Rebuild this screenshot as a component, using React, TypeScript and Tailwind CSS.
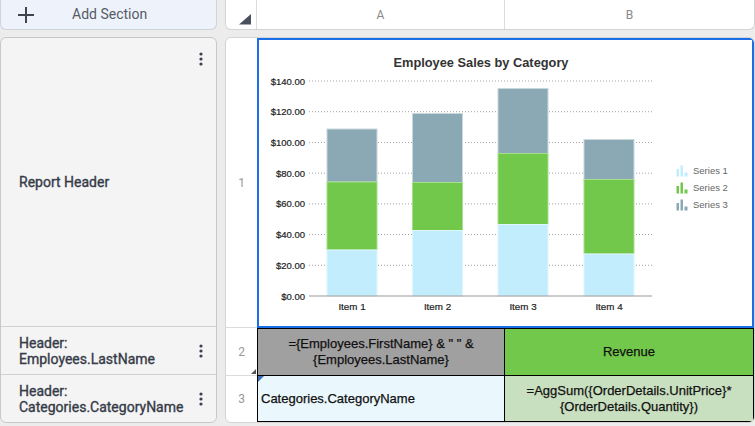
import React from 'react';

const ui = { fontFamily: 'Roboto, "Liberation Sans", sans-serif' };
const cellFont = { fontFamily: '"Liberation Sans", Arial, sans-serif' };

function Kebab() {
  return (
    <svg width="4" height="14" viewBox="0 0 4 14" className="shrink-0">
      <circle cx="2" cy="2" r="1.6" fill="#3c4150" />
      <circle cx="2" cy="7" r="1.6" fill="#3c4150" />
      <circle cx="2" cy="12" r="1.6" fill="#3c4150" />
    </svg>
  );
}

function LegendIcon({ color }: { color: string }) {
  return (
    <svg width="12" height="12" viewBox="0 0 12 12">
      <rect x="0.5" y="4" width="2.5" height="7.5" fill={color} />
      <rect x="4.5" y="0.5" width="2.5" height="11" fill={color} />
      <rect x="8.5" y="7.5" width="3" height="4" fill={color} />
    </svg>
  );
}

const s1 = '#c1edfd';
const s2 = '#72c84a';
const s3 = '#8aa9b4';

const bars = [
  { x: 326, label: 'Item 1', tops: [249, 181, 128] },
  { x: 411.5, label: 'Item 2', tops: [229.5, 181.5, 112.5] },
  { x: 497, label: 'Item 3', tops: [223.5, 152.5, 87.5] },
  { x: 583, label: 'Item 4', tops: [253, 178.5, 138.5] },
];

const ticks = [140, 120, 100, 80, 60, 40, 20, 0];

function Chart() {
  const y = (v: number) => 295 - v * 1.5357;
  return (
    <svg viewBox="258 39 494 286" width="494" height="286" style={cellFont}>
      <text x="480" y="65.5" textAnchor="middle" fontSize="12.8" fontWeight="700" fill="#333">
        Employee Sales by Category
      </text>
      {ticks.map((t) => (
        <g key={t}>
          <text x="304" y={y(t) + 3.5} textAnchor="end" fontSize="9.5" fill="#222" stroke="#222" strokeWidth="0.2">
            ${t.toFixed(2)}
          </text>
          {t > 0 && (
            <line x1="308" x2="651" y1={y(t)} y2={y(t)} stroke="#888" strokeWidth="0.8" strokeDasharray="1 2" />
          )}
        </g>
      ))}
      {bars.map((b) => (
        <g key={b.label}>
          <rect x={b.x} y={b.tops[2]} width="50" height={b.tops[1] - b.tops[2]} fill={s3} stroke="#c9d8dd" strokeWidth="1" />
          <rect x={b.x} y={b.tops[1]} width="50" height={b.tops[0] - b.tops[1]} fill={s2} stroke="#a6df8c" strokeWidth="1" />
          <rect x={b.x} y={b.tops[0]} width="50" height={295 - b.tops[0]} fill={s1} stroke="#dff6ff" strokeWidth="1" />
          <text x={b.x + 25} y="308.5" textAnchor="middle" fontSize="9.8" fill="#222" stroke="#222" strokeWidth="0.2">
            {b.label}
          </text>
        </g>
      ))}
      <line x1="308" x2="651" y1="295" y2="295" stroke="#999" strokeWidth="1" />
    </svg>
  );
}

export default function App() {
  return (
    <div className="flex h-[426px] w-[755px] gap-2 overflow-hidden bg-[#ececec]" style={ui}>
      {/* sections */}
      <div className="flex w-[217px] shrink-0 flex-col gap-[7px] pb-[3px]">
        <button className="flex h-[30px] items-center rounded-b-md border border-t-0 border-[#cfd3dc] bg-[#eef2fb] pl-4 text-[14px] text-[#555b66]">
          <svg width="18" height="18" viewBox="0 0 18 18">
            <path d="M9 1v16M1 9h16" stroke="#3f4450" strokeWidth="2" />
          </svg>
          <span className="ml-[37px]">Add Section</span>
        </button>
        <div className="flex flex-1 flex-col overflow-hidden rounded-md border border-[#c8c8c8] bg-[#f4f4f4] text-[14px] leading-[16px] text-[#363b48] [-webkit-text-stroke:0.35px_#363b48]">
          <div className="flex h-[289px] border-b border-[#d0d0d0] pl-[18px] pr-[13px]">
            <span className="flex-1 self-center">Report Header</span>
            <div className="mt-[14px]">
              <Kebab />
            </div>
          </div>
          <div className="flex h-[48px] items-center border-b border-[#d0d0d0] pl-[18px] pr-[13px]">
            <span className="flex-1">
              Header:
              <br />
              Employees.LastName
            </span>
            <Kebab />
          </div>
          <div className="flex flex-1 items-center pl-[18px] pr-[13px]">
            <span className="flex-1">
              Header:
              <br />
              Categories.CategoryName
            </span>
            <Kebab />
          </div>
        </div>
      </div>

      {/* grid */}
      <div className="flex flex-1 flex-col gap-[7px] pb-[3px]">
        <div className="flex h-[30px] rounded-b-md border border-t-0 border-[#d4d4d4] bg-white text-[12px] text-[#888]">
          <div className="relative w-[31px] border-r border-[#dcdcdc]">
            <svg width="13" height="11" viewBox="0 0 13 11" className="absolute left-[13px] top-[14px]">
              <path d="M12 0V10.5H0Z" fill="#4b5060" />
            </svg>
          </div>
          <div className="flex w-[248px] items-center justify-center border-r border-[#dcdcdc]">A</div>
          <div className="flex flex-1 items-center justify-center">B</div>
        </div>
        <div className="grid flex-1 grid-cols-[31px_248px_1fr] grid-rows-[290px_48px_1fr] overflow-hidden rounded-md border border-[#d4d4d4] bg-white">
          <div className="flex items-center justify-center border-b border-[#dcdcdc] text-[12px] text-[#999]">1</div>
          <div className="col-span-2 border-2 border-[#1a6ee8] bg-white">
            <div className="relative">
              <Chart />
              <div className="absolute left-[417px] top-[125px] flex flex-col gap-[5px] text-[9.5px] leading-[12px] text-[#666]" style={cellFont}>
                <div className="flex items-center gap-[5px]">
                  <LegendIcon color={s1} />
                  Series 1
                </div>
                <div className="flex items-center gap-[5px]">
                  <LegendIcon color={s2} />
                  Series 2
                </div>
                <div className="flex items-center gap-[5px]">
                  <LegendIcon color={s3} />
                  Series 3
                </div>
              </div>
            </div>
          </div>

          <div className="relative flex items-center justify-center border-b border-[#dcdcdc] text-[12px] text-[#999]">
            2
            <svg width="5" height="5" viewBox="0 0 5 5" className="absolute bottom-[1px] right-[1px]">
              <path d="M5 0V5H0Z" fill="#555" />
            </svg>
          </div>
          <div
            className="flex items-center justify-center border border-black bg-[#a0a0a0] text-center text-[13px] leading-[16px] text-[#111] [-webkit-text-stroke:0.25px_#111]"
            style={cellFont}
          >
            ={'{'}Employees.FirstName{'}'} &amp; " " &amp;
            <br />
            {'{'}Employees.LastName{'}'}
          </div>
          <div
            className="flex items-center justify-center border-y border-r border-black bg-[#72c84a] text-[13px] text-[#111] [-webkit-text-stroke:0.25px_#111]"
            style={cellFont}
          >
            Revenue
          </div>

          <div className="flex items-center justify-center text-[12px] text-[#999]">3</div>
          <div
            className="relative flex items-center border-x border-b border-black bg-[#eaf7fd] pl-[3px] text-[13px] text-[#111] [-webkit-text-stroke:0.25px_#111]"
            style={cellFont}
          >
            <svg width="6" height="6" viewBox="0 0 6 6" className="absolute left-0 top-0">
              <path d="M0 0H6L0 6Z" fill="#3d70b3" />
            </svg>
            Categories.CategoryName
          </div>
          <div
            className="flex items-center justify-center border-b border-r border-black bg-[#c9e0c0] text-center text-[13px] leading-[16px] text-[#111] [-webkit-text-stroke:0.25px_#111]"
            style={cellFont}
          >
            =AggSum({'{'}OrderDetails.UnitPrice{'}'}*
            <br />
            {'{'}OrderDetails.Quantity{'}'})
          </div>
        </div>
      </div>
    </div>
  );
}
